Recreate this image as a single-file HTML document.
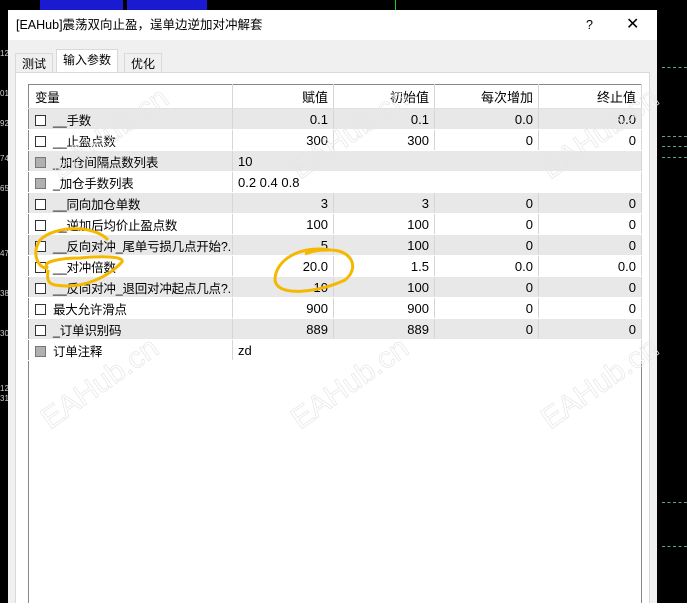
<!DOCTYPE html>
<html style="height:603px;overflow:hidden"><head><meta charset="utf-8"><style>
*{margin:0;padding:0;box-sizing:border-box}
body{width:687px;height:603px;background:#000;position:relative;overflow:hidden;font-family:"Liberation Sans","Noto Sans CJK SC",sans-serif;font-size:13px;color:#000}
.abs{position:absolute}
.dlg{left:8px;top:10px;width:649px;height:593px;background:#f0f0f0;overflow:hidden}
.title{left:0;top:0;width:649px;height:30px;background:#fff;font-size:12.5px;line-height:30px;padding-left:8px}
.tab{top:41px;height:22px;line-height:20px;font-size:12px;padding:0 6px;border:1px solid #d9d9d9;border-bottom:none;background:#f0f0f0}
.panel{left:7px;top:62px;width:635px;height:560px;border:1px solid #d9d9d9;background:#fff}
table{position:absolute;left:20px;top:74px;width:613px;table-layout:fixed;border-collapse:collapse;border:1px solid #828790;background:#fff}
td{height:21px;border-right:1px solid #d6d6d6;border-bottom:1px solid #fff;padding:0 5px;text-align:right;font-size:13px;white-space:nowrap;overflow:hidden}
tr.h td{height:24px;background:#fff;border-bottom:1px solid #e0e0e0}
tr.g td{background:#e8e8e8}
td.n{text-align:left;padding-left:6px;font-size:12.5px;letter-spacing:-0.2px}
.cb{display:inline-block;width:11px;height:11px;border:1px solid #333;background:#fff;vertical-align:-1px;margin-right:7px}
.cb.f{background:#b0b0b0;border-color:#777}
</style></head><body>
<div class="abs" style="left:40px;top:0;width:83px;height:10px;background:#1a1ad0"></div>
<div class="abs" style="left:127px;top:0;width:80px;height:10px;background:#1a1ad0"></div>
<div class="abs" style="left:395px;top:0;width:1px;height:10px;background:#2c2"></div>
<div class="abs" style="left:0;top:0;width:8px;height:603px;color:#ccc;font-size:8px;line-height:8px">
<div style="position:absolute;top:50px">12</div><div style="position:absolute;top:90px">01</div><div style="position:absolute;top:120px">92</div><div style="position:absolute;top:155px">74</div><div style="position:absolute;top:185px">65</div><div style="position:absolute;top:250px">47</div><div style="position:absolute;top:290px">38</div><div style="position:absolute;top:330px">30</div><div style="position:absolute;top:385px">12</div><div style="position:absolute;top:395px">31</div></div>
<div class="abs" style="left:662px;top:67px;width:25px;border-top:1px dashed #5a8"></div>
<div class="abs" style="left:662px;top:136px;width:25px;border-top:1px dashed #5a8"></div>
<div class="abs" style="left:662px;top:146px;width:25px;border-top:1px dashed #5a8"></div>
<div class="abs" style="left:662px;top:157px;width:25px;border-top:1px dashed #5a8"></div>
<div class="abs" style="left:662px;top:502px;width:25px;border-top:1px dashed #5a8"></div>
<div class="abs" style="left:662px;top:546px;width:25px;border-top:1px dashed #5a8"></div>
<div class="abs dlg">
<div class="abs title">[EAHub]震荡双向止盈，逞单边逆加对冲解套<span style="position:absolute;left:578px">?</span><span style="position:absolute;left:618px;font-size:16px">✕</span></div>
<div class="abs tab" style="left:7px;top:43px;height:20px">测试</div>
<div class="abs tab" style="left:48px;top:39px;height:25px;background:#fff;font-size:12px">输入参数</div>
<div class="abs tab" style="left:116px;top:43px;height:20px">优化</div>
<div class="abs panel"></div>
<table>
<colgroup><col style="width:204px"><col style="width:101px"><col style="width:101px"><col style="width:104px"><col style="width:103px"></colgroup>
<tr class="h"><td class="n">变量</td><td>赋值</td><td>初始值</td><td>每次增加</td><td>终止值</td></tr>
<tr class="g"><td class="n"><span class="cb"></span>__手数</td><td>0.1</td><td>0.1</td><td>0.0</td><td>0.0</td></tr>
<tr><td class="n"><span class="cb"></span>__止盈点数</td><td>300</td><td>300</td><td>0</td><td>0</td></tr>
<tr class="g"><td class="n"><span class="cb f"></span>_加仓间隔点数列表</td><td colspan="4" style="text-align:left">10</td></tr>
<tr><td class="n"><span class="cb f"></span>_加仓手数列表</td><td colspan="4" style="text-align:left">0.2 0.4 0.8</td></tr>
<tr class="g"><td class="n"><span class="cb"></span>__同向加仓单数</td><td>3</td><td>3</td><td>0</td><td>0</td></tr>
<tr><td class="n"><span class="cb"></span>__逆加后均价止盈点数</td><td>100</td><td>100</td><td>0</td><td>0</td></tr>
<tr class="g"><td class="n"><span class="cb"></span>__反向对冲_尾单亏损几点开始?..</td><td>5</td><td>100</td><td>0</td><td>0</td></tr>
<tr><td class="n"><span class="cb"></span>__对冲倍数</td><td>20.0</td><td>1.5</td><td>0.0</td><td>0.0</td></tr>
<tr class="g"><td class="n"><span class="cb"></span>__反向对冲_退回对冲起点几点?..</td><td>10</td><td>100</td><td>0</td><td>0</td></tr>
<tr><td class="n"><span class="cb"></span>最大允许滑点</td><td>900</td><td>900</td><td>0</td><td>0</td></tr>
<tr class="g"><td class="n"><span class="cb"></span>_订单识别码</td><td>889</td><td>889</td><td>0</td><td>0</td></tr>
<tr><td class="n"><span class="cb f"></span>订单注释</td><td colspan="4" style="text-align:left">zd</td></tr>
<tr><td colspan="5" style="height:260px;border:none"></td></tr>
</table>
</div>
<svg class="abs" style="left:0;top:0" width="687" height="603">
<path d="M108 240 C95 225 55 225 40 240 C30 255 40 270 48 268 M48 268 C40 262 60 258 80 258 C100 256 125 256 122 262 C110 275 85 290 55 285 C45 283 48 275 48 270" fill="none" stroke="#f5b800" stroke-width="3"/>
<path d="M330 250 C300 245 275 260 275 280 C277 298 320 292 345 280 C360 268 352 250 330 250 C315 250 310 252 305 254" fill="none" stroke="#f5b800" stroke-width="3"/>
<g fill="none" stroke="#e6e6e6" font-size="30" font-family="Liberation Sans" stroke-width="0.7">
<text x="50" y="430" transform="rotate(-35 50 430)">EAHub.cn</text>
<text x="300" y="430" transform="rotate(-35 300 430)">EAHub.cn</text>
<text x="550" y="430" transform="rotate(-35 550 430)">EAHub.cn</text>
<text x="60" y="180" transform="rotate(-35 60 180)">EAHub.cn</text>
<text x="300" y="180" transform="rotate(-35 300 180)">EAHub.cn</text>
<text x="550" y="180" transform="rotate(-35 550 180)">EAHub.cn</text>
</g>
</svg>
</body></html>
